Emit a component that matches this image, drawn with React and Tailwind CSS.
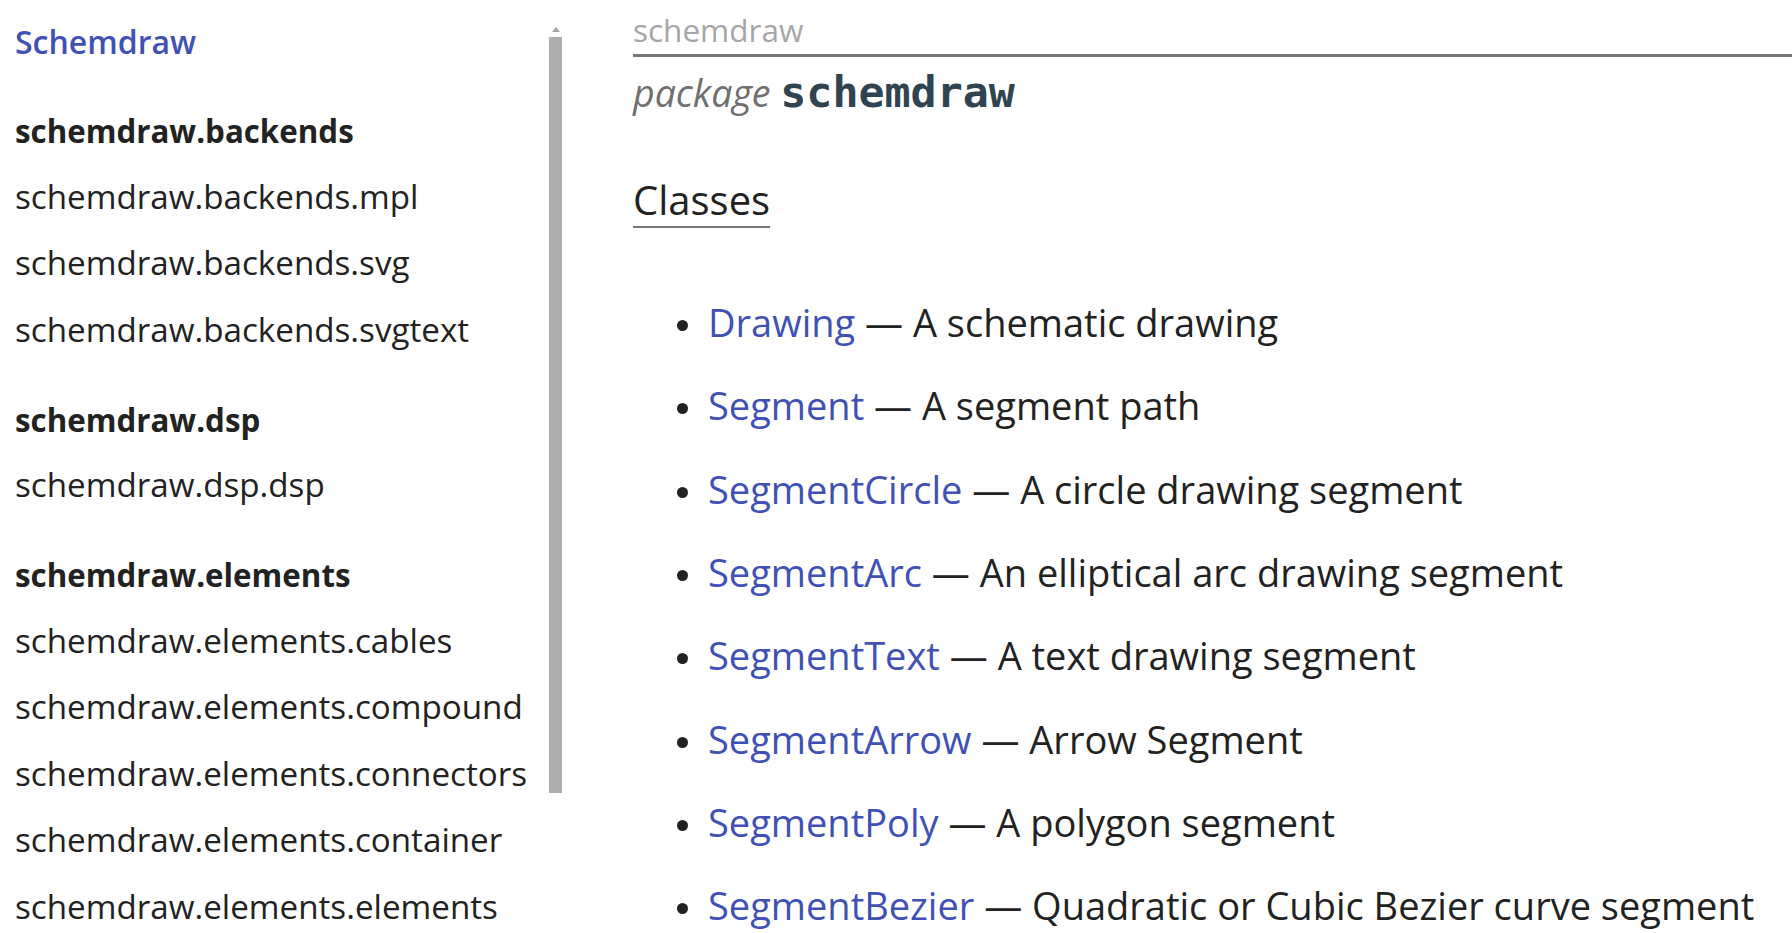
import React from "react";

const groups = [
  {
    title: "schemdraw.backends",
    items: ["schemdraw.backends.mpl", "schemdraw.backends.svg", "schemdraw.backends.svgtext"],
  },
  { title: "schemdraw.dsp", items: ["schemdraw.dsp.dsp"] },
  {
    title: "schemdraw.elements",
    items: [
      "schemdraw.elements.cables",
      "schemdraw.elements.compound",
      "schemdraw.elements.connectors",
      "schemdraw.elements.container",
      "schemdraw.elements.elements",
    ],
  },
];

const classes = [
  ["Drawing", "A schematic drawing"],
  ["Segment", "A segment path"],
  ["SegmentCircle", "A circle drawing segment"],
  ["SegmentArc", "An elliptical arc drawing segment"],
  ["SegmentText", "A text drawing segment"],
  ["SegmentArrow", "Arrow Segment"],
  ["SegmentPoly", "A polygon segment"],
  ["SegmentBezier", "Quadratic or Cubic Bezier curve segment"],
];

const Sidebar = () => (
  <aside className="w-[562px] shrink-0 flex">
    <nav className="flex-1 pl-[15px] pt-[8px] text-[#222]">
      <a href="#" className="block pt-[2px] text-[32px] leading-[64.5px] font-semibold text-[#3f51b5]">
        Schemdraw
      </a>
      {groups.map((g) => (
        <div key={g.title} className="mt-[22.5px]">
          <div className="pt-[2px] text-[31.3px] leading-[64.5px] font-bold">{g.title}</div>
          {g.items.map((it) => (
            <div key={it} className="text-[33.2px] leading-[66.5px] whitespace-nowrap">
              {it}
            </div>
          ))}
        </div>
      ))}
    </nav>
    {/* fake scrollbar */}
    <div className="w-[13px] flex flex-col items-center pt-[27px]">
      <svg width="8" height="5" viewBox="0 0 8 5">
        <path d="M4 0 L8 5 L0 5 Z" fill="#a3a3a3" />
      </svg>
      <div className="mt-[5px] w-[13px] h-[756px] bg-[#adadad]" />
    </div>
  </aside>
);

const App = () => {
  return (
    <div className="flex h-[933px] overflow-hidden bg-white font-['Open_Sans',sans-serif]">
      <Sidebar />
      <main className="flex-1 pl-[71px]">
        <div className="pt-[10px] pb-[4px] border-b-[3px] border-[#777] text-[31.5px] leading-[40px] text-[#a6a6a6]">
          schemdraw
        </div>
        <h1 className="mt-[7px] text-[37.5px] leading-[56px] font-normal">
          <span className="italic text-[#707070]">package</span>{" "}
          <span className="font-['DejaVu_Sans_Mono',monospace] font-bold text-[43.3px] text-[#2f4450]">schemdraw</span>
        </h1>
        <div className="mt-[52px]">
          <h2 className="inline-block text-[40px] leading-[53px] text-[#222] border-b-2 border-[#777]">Classes</h2>
        </div>
        <ul className="mt-[53px]">
          {classes.map(([name, desc]) => (
            <li key={name} className="flex items-center pl-[44px] h-[83.3px] text-[38px] whitespace-nowrap">
              <span className="w-[11px] h-[11px] mt-[6px] rounded-full bg-[#222] shrink-0" />
              <span className="ml-[20px]">
                <a href="#" className="text-[#3f51b5]">{name}</a>
                <span className="text-[#222]"> — {desc}</span>
              </span>
            </li>
          ))}
        </ul>
      </main>
    </div>
  );
};

export default App;
